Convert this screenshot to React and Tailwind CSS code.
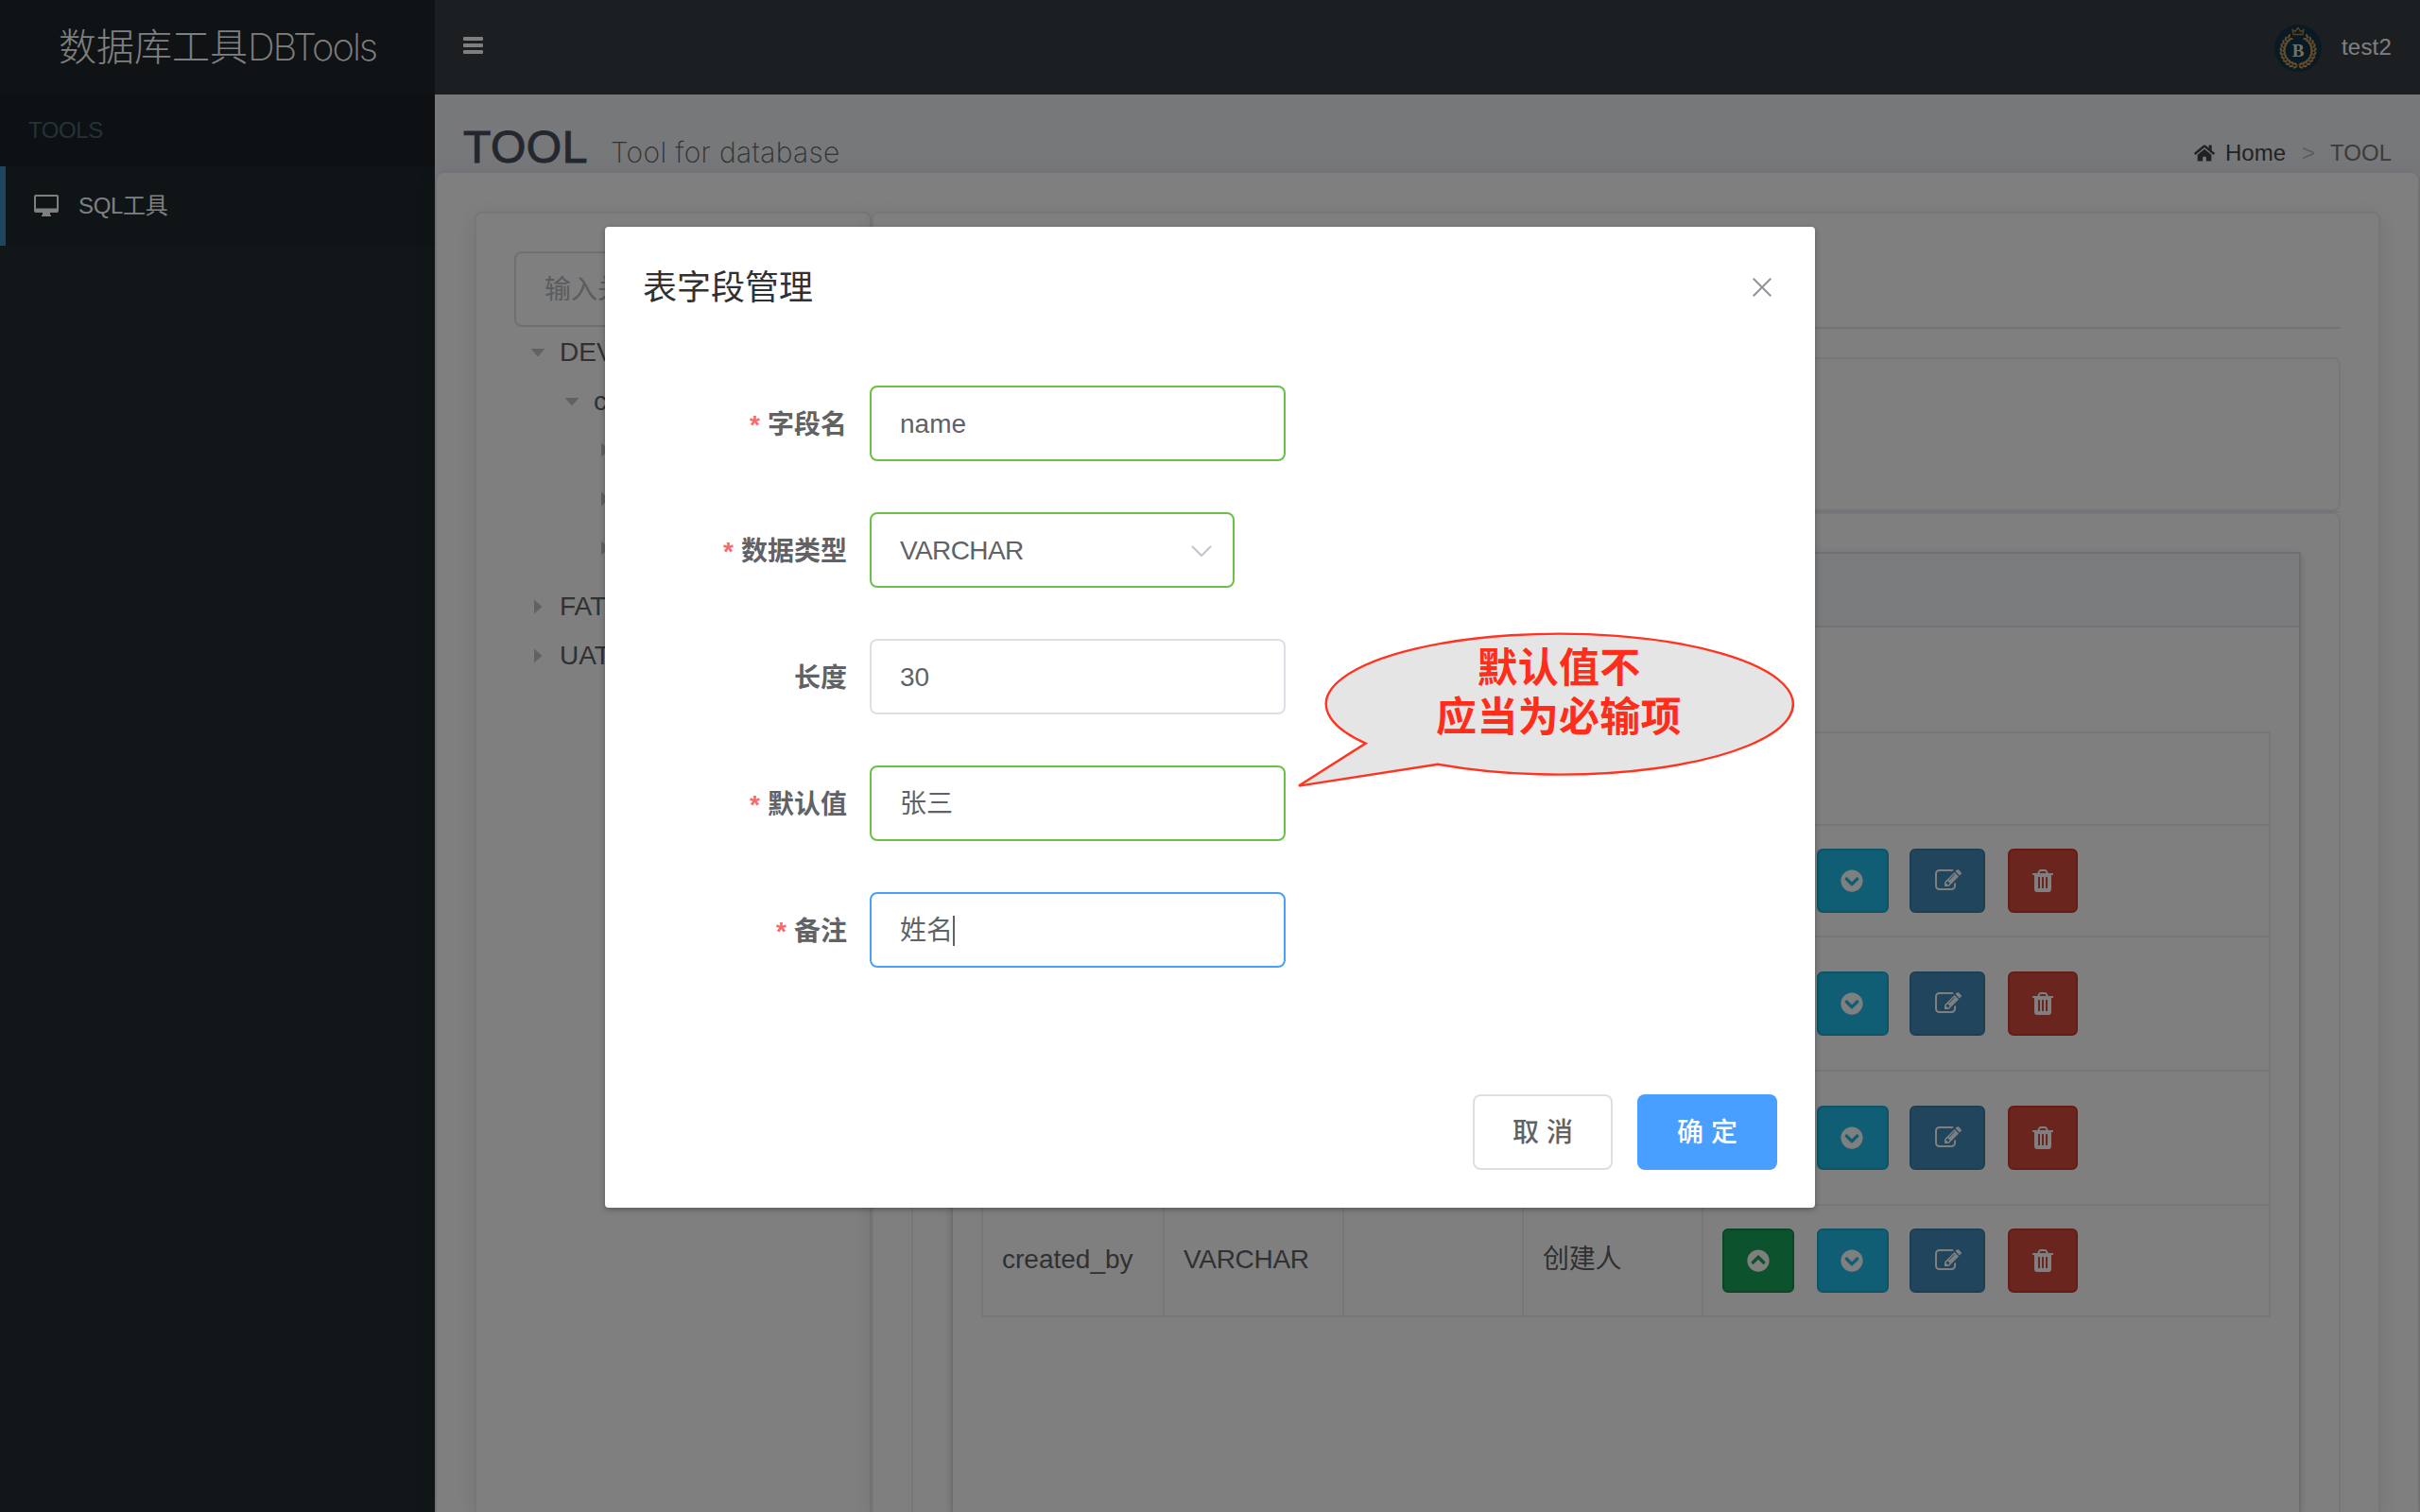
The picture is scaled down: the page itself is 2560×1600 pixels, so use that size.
import { FaChevronCircleUp, FaChevronCircleDown, FaHome } from "react-icons/fa";

const ROWS = [
  { h: "h-[118px]", cells: ["", "", "", ""] },
  { h: "h-[142px]", cells: ["", "", "", ""] },
  { h: "h-[142px]", cells: ["", "", "", ""] },
  { h: "h-[116px]", cells: ["created_by", "VARCHAR", "", "创建人"] },
];

function EditIcon() {
  return (
    <svg viewBox="0 0 1792 1792" className="h-7 w-7" fill="currentColor">
      <path d="M888 1184l116-116-152-152-116 116v56h96v96h56zm440-720q-16-16-33 1L945 815q-17 17-1 33t33-1l350-350q17-17 1-33zm80 594v190q0 119-84.500 203.500T1120 1536H288q-119 0-203.500-84.500T0 1248V416q0-119 84.500-203.500T288 128h832q63 0 117 25 15 7 18 23 3 17-9 29l-49 49q-14 14-32 8-23-6-45-6H288q-66 0-113 47t-47 113v832q0 66 47 113t113 47h832q66 0 113-47t47-113v-126q0-13 9-22l64-64q15-15 35-7t20 29zm-96-738l288 288-672 672H640V992zm444 132l-92 92-288-288 92-92q28-28 68-28t68 28l152 152q28 28 28 68t-28 68z" />
    </svg>
  );
}

function TrashIcon() {
  return (
    <svg viewBox="0 0 1408 1792" className="h-7 w-[22px]" fill="currentColor">
      <path d="M512 1376V672q0-14-9-23t-23-9h-64q-14 0-23 9t-9 23v704q0 14 9 23t23 9h64q14 0 23-9t9-23zm256 0V672q0-14-9-23t-23-9h-64q-14 0-23 9t-9 23v704q0 14 9 23t23 9h64q14 0 23-9t9-23zm256 0V672q0-14-9-23t-23-9h-64q-14 0-23 9t-9 23v704q0 14 9 23t23 9h64q14 0 23-9t9-23zM480 384h448l-48-117q-7-9-17-11H546q-10 2-17 11zm928 32v64q0 14-9 23t-23 9h-96v948q0 83-47 143.500t-113 60.500H288q-66 0-113-58.500T128 1464V512H32q-14 0-23-9t-9-23v-64q0-14 9-23t23-9h309l70-167q15-37 54-63t79-26h320q40 0 79 26t54 63l70 167h309q14 0 23 9t9 23z" />
    </svg>
  );
}

const btn = "flex h-[68px] items-center justify-center rounded-[6px] border-2 text-white";

function Actions() {
  return (
    <div className="flex pl-5">
      <button className={`${btn} w-[76px] border-[#148a4c] bg-[#18a45a]`}><FaChevronCircleUp size={24} /></button>
      <button className={`${btn} ml-6 w-[76px] border-[#1ca9d0] bg-[#20bde8] pr-0.5`}><FaChevronCircleDown size={24} /></button>
      <button className={`${btn} ml-[22px] w-[80px] border-[#3c7da8] bg-[#428bba] pl-0.5`}><EditIcon /></button>
      <button className={`${btn} ml-6 w-[74px] border-[#cc382c] bg-[#d64a3f]`}><TrashIcon /></button>
    </div>
  );
}

function Avatar() {
  const leaves = [];
  for (let i = 0; i < 11; i++) {
    const a = ((100 + i * 13.8) * Math.PI) / 180;
    for (const r of [14.6, 18]) {
      const x = 25 + r * Math.cos(a);
      const y = 27.5 + r * Math.sin(a);
      const deg = (a * 180) / Math.PI + (r > 16 ? 60 : 118);
      leaves.push(<ellipse key={`${i}-${r}`} cx={x} cy={y} rx="2.500" ry="1.200" transform={`rotate(${deg} ${x} ${y})`} />);
    }
  }
  return (
    <svg viewBox="0 0 50 50" className="mt-0.5 size-[50px]">
      <circle cx="25" cy="25" r="25" fill="#13344a" />
      <g fill="#c79a55">{leaves}</g>
      <g fill="#c79a55" transform="matrix(-1 0 0 1 50 0)">{leaves}</g>
      <path d="M20 10.500L19.200 5.500L22 7.500L25 3.500L28 7.500L30.800 5.500L30 10.500Z" fill="none" stroke="#a98345" strokeWidth="1.400" />
      <text x="25" y="33.500" textAnchor="middle" fontSize="19" fontWeight="bold" fill="#efe3b8" fontFamily="Liberation Serif, serif">B</text>
    </svg>
  );
}

function Caret({ open }) {
  return (
    <svg viewBox="0 0 16 16" className="size-4 shrink-0 text-[#c0c4cc]" fill="currentColor">
      {open ? <path d="M.5 4h15L8 12.500z" /> : <path d="M4 .5v15L12.500 8z" />}
    </svg>
  );
}

function TreeNode({ open, label, indent }) {
  return (
    <div className={`flex h-[52px] items-center text-[28px] text-[#606266] ${indent}`}>
      <Caret open={open} />
      <span className="ml-[15px]">{label}</span>
    </div>
  );
}

function Field({ label, required, border, width = "w-[440px]", children }) {
  return (
    <div className="mb-[54px] flex h-20 items-center">
      <label className="w-[240px] pt-[3px] pr-6 text-right text-[28px] font-bold text-[#606266]">
        {required && <span className="mr-2 text-[#f56c6c]">*</span>}
        {label}
      </label>
      <div className={`flex h-20 items-center rounded-lg border-2 bg-white px-[30px] pt-0.5 text-[28px] text-[#606266] ${width} ${border}`}>
        {children}
      </div>
    </div>
  );
}

function Dialog() {
  return (
    <div className="absolute top-[240px] left-[640px] flex h-[1038px] w-[1280px] flex-col rounded-[4px] bg-white shadow-[0_2px_6px_rgba(0,0,0,0.3)]">
      <div className="flex h-[128px] items-center justify-between pr-[46px] pl-10">
        <h2 className="pt-0.5 text-[36px] leading-[48px] text-[#303133]">表字段管理</h2>
        <svg viewBox="0 0 20 20" className="size-5" stroke="#909399" strokeWidth="2" fill="none">
          <path d="M.7.7l18.600 18.600M19.300.7L.7 19.300" />
        </svg>
      </div>
      <div className="flex-1 pt-10 pl-10">
        <Field label="字段名" required border="border-[#6bc048]">name</Field>
        <Field label="数据类型" required border="border-[#6bc048]" width="w-[386px] justify-between">
          <span className="tracking-[-0.6px]">VARCHAR</span>
          <svg viewBox="0 0 22 12" className="-mr-[8px] h-3 w-[22px]" fill="none" stroke="#c0c4cc" strokeWidth="2">
            <path d="M1 1l10 10L21 1" />
          </svg>
        </Field>
        <Field label="长度" border="border-[#dcdfe6]">30</Field>
        <Field label="默认值" required border="border-[#6bc048]">张三</Field>
        <Field label="备注" required border="border-[#4a9ff8]">
          姓名<span className="h-8 w-0.5 bg-[#606266]" />
        </Field>
      </div>
      <div className="flex justify-end gap-[26px] pr-10 pb-10">
        <button className="h-20 w-[148px] rounded-lg border-2 border-[#dcdfe6] pt-0.5 text-[28px] font-medium text-[#606266]">取 消</button>
        <button className="h-20 w-[148px] rounded-lg bg-[#489fff] pt-0.5 text-[28px] font-medium text-white">确 定</button>
      </div>
      <div className="absolute top-[428px] left-[730px] h-[168px] w-[530px]">
        <svg viewBox="0 0 530 168" className="absolute inset-0 size-full" fill="#e5e5e5" stroke="#ff3320" strokeWidth="2.400">
          <path d="M74.600 118.600A247 74.500 0 1 1 151 140.700L4 163.600Z" />
        </svg>
        <div className="relative pt-[13px] pl-[28px] text-center text-[43px] leading-[52px] font-bold tracking-[0.3px] text-[#ff2d1a]">
          默认值不<br />应当为必输项
        </div>
      </div>
    </div>
  );
}

export default function App() {
  return (
    <div className="relative flex h-[1600px] w-[2560px] overflow-hidden bg-white font-['Liberation_Sans','Noto_Sans_CJK_SC',sans-serif]">
      <aside className="h-full w-[460px] shrink-0 bg-[#222d32]">
        <div className="flex h-[100px] items-center justify-center bg-[#1f272b] text-[40px] font-extralight whitespace-nowrap text-white">
          <span>数据库工具</span>
          <span className="font-['Inter'] tracking-[-2px]">DBTools</span>
        </div>
        <div className="flex h-[76px] items-center bg-[#1a2226] pl-[30px] text-[24px] tracking-[-0.4px] text-[#4b646f]">TOOLS</div>
        <div className="flex h-[84px] items-center border-l-[6px] border-[#3c8dbc] bg-[#1e282c] pl-[30px] text-[24px] text-white">
          <svg viewBox="0 0 26 24" className="h-6 w-[26px]" fill="currentColor">
            <path fillRule="evenodd" d="M2 0h22a2 2 0 0 1 2 2v15a2 2 0 0 1-2 2h-7v2l1 1v1H8v-1l1-1v-2H2a2 2 0 0 1-2-2V2a2 2 0 0 1 2-2zM2 2v12.500h22V2z" />
          </svg>
          <span className="ml-[21px] tracking-[-0.3px]">SQL工具</span>
        </div>
      </aside>

      <div className="flex h-full flex-1 flex-col bg-[#ecf0f5]">
        <header className="flex h-[100px] shrink-0 items-center justify-between bg-[#373e43] pr-[30px] pl-[30px] text-white">
          <svg viewBox="0 0 21 18" className="-mt-[4px] h-[18px] w-[21px]" fill="currentColor">
            <rect width="21" height="4" rx="1" />
            <rect y="7" width="21" height="4" rx="1" />
            <rect y="14" width="21" height="4" rx="1" />
          </svg>
          <div className="flex items-center text-[24px]">
            <Avatar />
            <span className="ml-[21px] tracking-[0.2px]">test2</span>
          </div>
        </header>

        <div className="flex h-[83px] shrink-0 items-end justify-between pr-[30px] pb-[4px] pl-[30px]">
          <div className="-mb-[6px] flex items-baseline text-[48px] leading-[48px] tracking-[0.5px] text-[#49505c]">
            <span className="[-webkit-text-stroke:1px_#49505c]">TOOL</span>
            <span className="ml-6 font-['Inter'] text-[30px] font-extralight tracking-[0.35px] text-[#666]">Tool for database</span>
          </div>
          <div className="flex items-center text-[24px] leading-[34px]">
            <FaHome size={22} className="mr-[11px] text-[#444]" />
            <span className="text-[#444]">Home</span>
            <span className="mr-[16px] ml-[17px] text-[#bbb]">&gt;</span>
            <span className="text-[#777]">TOOL</span>
          </div>
        </div>

        <div className="mx-0.5 flex flex-1 rounded-t-lg bg-white px-10 pt-[41px] shadow-[0_4px_24px_rgba(0,0,0,0.1),0_0_0_2px_#ebeef5]">
          <div className="w-[420px] shrink-0 rounded-t-lg border-2 border-b-0 border-[#ebeef5] bg-white px-10 pt-10 shadow-[0_4px_24px_rgba(0,0,0,0.1)]">
            <div className="flex h-20 items-center rounded-lg border-2 border-[#dcdfe6] px-[30px] pt-0.5 text-[28px] whitespace-nowrap text-[#b4b8c0]">
              输入关
            </div>
            <div className="pt-px">
              <TreeNode open label="DEV" indent="pl-[17px]" />
              <TreeNode open label="c" indent="pl-[53px]" />
              <div className="-mt-px">
                <TreeNode label="" indent="pl-[88px]" />
                <TreeNode label="" indent="pl-[88px]" />
                <TreeNode label="" indent="pl-[88px]" />
              </div>
              <div className="h-[10px]" />
              <TreeNode label="FAT" indent="pl-[17px]" />
              <TreeNode label="UAT" indent="pl-[17px]" />
            </div>
          </div>

          <div className="flex flex-1 flex-col rounded-t-lg border-2 border-b-0 border-[#ebeef5] bg-white px-10 shadow-[0_4px_24px_rgba(0,0,0,0.1)]">
            <div className="h-[122px] border-b-2 border-[#e4e7ed]" />
            <div className="mt-[30px] h-[163px] rounded-lg border-2 border-[#ebeef5]" />
            <div className="h-px bg-[#e4e6ee]" />
            <div className="flex flex-1 flex-col rounded-t-lg border-2 border-b-0 border-[#ebeef5] px-10 pt-10">
              <div className="flex-1 border-2 border-b-0 border-[#dcdfe6] shadow-[0_4px_8px_rgba(0,0,0,0.12),0_0_12px_rgba(0,0,0,0.04)]">
                <div className="h-[78px] border-b-2 border-[#e4e7ed] bg-[#f5f7fa]" />
                <div className="px-[30px] pt-[110px]">
                  <div className="border-2 border-[#ebeef5] text-[28px] text-[#606266]">
                    <div className="h-[98px] border-b-2 border-[#ebeef5]" />
                    {ROWS.map((row, i) => (
                      <div key={i} className={`flex items-stretch border-b-2 border-[#ebeef5] last:border-b-0 ${row.h}`}>
                        {row.cells.map((cell, j) => (
                          <div key={j} className="flex w-[190px] shrink-0 items-center border-r-2 border-[#ebeef5] px-5 pb-0.5 tracking-[-0.3px] whitespace-nowrap first:w-[192px] first:tracking-normal">
                            {cell}
                          </div>
                        ))}
                        <div className="flex flex-1 items-center"><Actions /></div>
                      </div>
                    ))}
                  </div>
                </div>
              </div>
            </div>
          </div>
        </div>
      </div>

      <div className="absolute inset-0 bg-black/50" />
      <Dialog />
    </div>
  );
}
